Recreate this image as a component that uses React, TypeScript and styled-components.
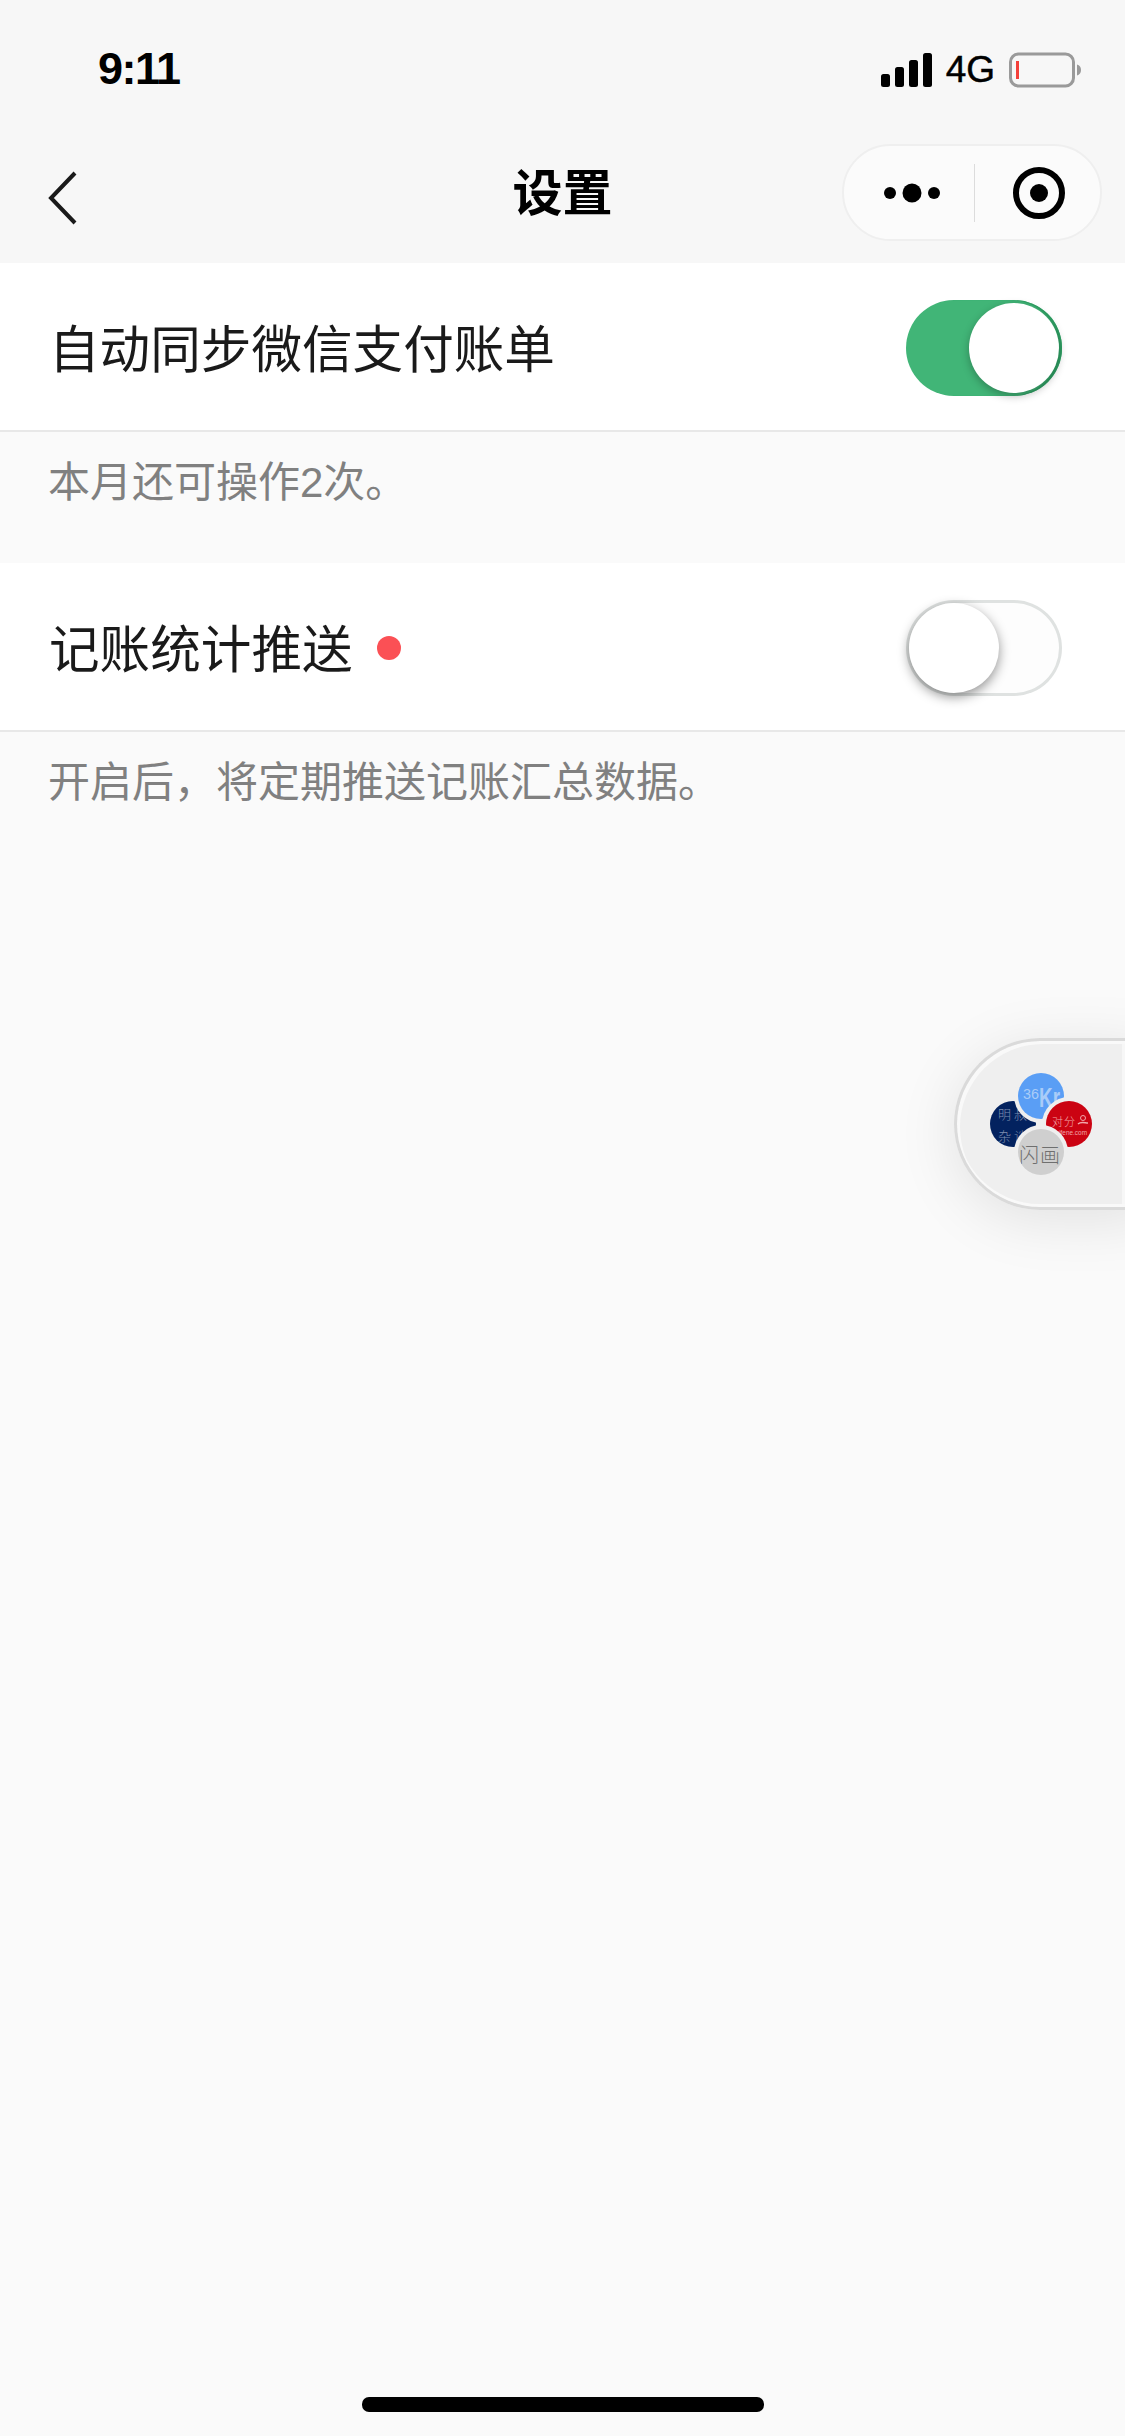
import React from 'react';
import styled, { createGlobalStyle } from 'styled-components';

const GlobalStyle = createGlobalStyle`
	html, body {
		margin: 0;
		padding: 0;
		background: #fafafa;
	}
	* {
		box-sizing: border-box;
	}
`;

const FONT = `"Liberation Sans", "Noto Sans CJK SC", sans-serif`;

const Page = styled.div`
	position: relative;
	display: flex;
	flex-direction: column;
	width: 1125px;
	height: 2436px;
	overflow: hidden;
	background: #fafafa;
	font-family: ${FONT};
`;

const Header = styled.header`
	background: #f7f7f7;
	height: 263px;
	flex: none;
`;

const StatusBar = styled.div`
	display: flex;
	justify-content: space-between;
	align-items: flex-start;
	height: 132px;
	padding: 45px 44px 0 98px;
`;

const Time = styled.span`
	margin-top: -2px;
	font-size: 45px;
	line-height: 52px;
	font-weight: 700;
	letter-spacing: -1.5px;
	color: #000;
`;

const StatusIcons = styled.div`
	display: flex;
	align-items: center;
	height: 50px;
`;

const Network = styled.span`
	font-size: 37px;
	line-height: 50px;
	color: #000;
	margin: 0 14px;
	-webkit-text-stroke: 0.5px #000;
`;

const NavBar = styled.nav`
	display: grid;
	grid-template-columns: 1fr auto 1fr;
	align-items: center;
	height: 131px;
	padding: 0 23px;
`;

const BackButton = styled.div`
	display: flex;
	align-items: center;
	margin-left: 25px;
`;

const Title = styled.h1`
	margin: 0 0 8px;
	font-size: 50px;
	line-height: 60px;
	font-weight: 700;
	color: #000;
`;

const Capsule = styled.div`
	justify-self: end;
	display: flex;
	align-items: center;
	width: 260px;
	height: 97px;
	margin-bottom: 10px;
	border: 2px solid #efefef;
	border-radius: 49px;
	background: #fbfbfb;
`;

const CapsuleSide = styled.div<{ $shift: number }>`
	display: flex;
	align-items: center;
	justify-content: center;
	flex: 1;
	height: 100%;
	padding-left: ${({ $shift }) => $shift}px;
`;

const CapsuleLine = styled.div`
	width: 1px;
	height: 58px;
	background: #dcdcdc;
`;

const Row = styled.section`
	display: flex;
	align-items: center;
	justify-content: space-between;
	height: 169px;
	padding: 3px 63px 0 49px;
	background: #fff;
	border-bottom: 2px solid #e8e8e8;
`;

const RowLabel = styled.div`
	display: flex;
	align-items: center;
	gap: 24px;
`;

const RowText = styled.span`
	padding-top: 5px;
	font-size: 50.6px;
	line-height: 60px;
	color: #1a1a1a;
`;

const RedDot = styled.span`
	width: 24px;
	height: 24px;
	border-radius: 50%;
	background: #fb5055;
`;

const Hint = styled.p<{ $height: number }>`
	margin: 0;
	height: ${({ $height }) => $height}px;
	padding: 22px 0 0 48px;
	font-size: 42px;
	line-height: 58px;
	color: #808080;
`;

const Track = styled.div<{ $on: boolean }>`
	display: flex;
	justify-content: ${({ $on }) => ($on ? 'flex-end' : 'flex-start')};
	align-items: center;
	width: 156px;
	height: 96px;
	padding: 0 3px;
	border-radius: 48px;
	background: ${({ $on }) => ($on ? '#41b577' : '#fdfdfd')};
	box-shadow: ${({ $on }) => ($on ? 'inset -3px 0 1px #2f9e63' : 'inset 0 0 0 3px #dfe2e1')};
`;

const Knob = styled.div<{ $on: boolean }>`
	width: 90px;
	height: 90px;
	border-radius: 50%;
	background: #fff;
	box-shadow: ${({ $on }) =>
		$on ? '0 3px 9px rgba(0, 0, 0, 0.28)' : '0 4px 12px rgba(0, 0, 0, 0.42)'};
`;

const FloatBall = styled.div`
	position: absolute;
	top: 1038px;
	right: -30px;
	display: flex;
	align-items: center;
	width: 201px;
	height: 172px;
	padding-left: 28px;
	border: 3px solid #dadada;
	border-right: none;
	border-radius: 86px 0 0 86px;
	background: linear-gradient(to right, #efefef 165px, #f7f7f7 165px);
	box-shadow: inset 3px 3px 0 #f9f9f9, inset 0 -3px 0 #f9f9f9,
		0 10px 60px rgba(0, 0, 0, 0.1);
`;

const HomeBar = styled.div`
	position: absolute;
	left: 362px;
	bottom: 24px;
	width: 402px;
	height: 15px;
	border-radius: 7px;
	background: #000;
`;

const Toggle = ({ on }: { on: boolean }) => (
	<Track $on={on}>
		<Knob $on={on} />
	</Track>
);

const SignalIcon = () => (
	<svg width='51' height='34' viewBox='0 0 51 34'>
		<rect x='0' y='21' width='9' height='13' rx='2.5' fill='#000' />
		<rect x='14' y='14' width='9' height='20' rx='2.5' fill='#000' />
		<rect x='28' y='7' width='9' height='27' rx='2.5' fill='#000' />
		<rect x='42' y='0' width='9' height='34' rx='2.5' fill='#000' />
	</svg>
);

const BatteryIcon = () => (
	<svg width='72' height='36' viewBox='0 0 72 36'>
		<rect x='1.5' y='2' width='63' height='32' rx='8' fill='none' stroke='#9a9a9a' strokeWidth='3' />
		<rect x='7' y='9' width='3' height='18' fill='#f4403a' />
		<path d='M68 12.5c2.6.6 4 2.800 4 5.500s-1.400 4.900-4 5.500z' fill='#9a9a9a' />
	</svg>
);

const BackIcon = () => (
	<svg width='30' height='54' viewBox='0 0 30 54'>
		<path d='M27 2 3 27l24 25' fill='none' stroke='#1a1a1a' strokeWidth='4' />
	</svg>
);

const MoreIcon = () => (
	<svg width='60' height='20' viewBox='0 0 60 20'>
		<circle cx='7' cy='10' r='6' fill='#000' />
		<circle cx='29' cy='10' r='9.500' fill='#000' />
		<circle cx='51' cy='10' r='6' fill='#000' />
	</svg>
);

const TargetIcon = () => (
	<svg width='54' height='54' viewBox='0 0 54 54'>
		<circle cx='27' cy='27' r='23' fill='none' stroke='#000' strokeWidth='6' />
		<circle cx='27' cy='27' r='9' fill='#000' />
	</svg>
);

const AppLogos = () => (
	<svg width='120' height='120' viewBox='0 0 120 120'>
		<defs>
			<clipPath id='navy'>
				<circle cx='28' cy='60' r='23' />
			</clipPath>
			<clipPath id='blue'>
				<circle cx='56' cy='32' r='23' />
			</clipPath>
			<clipPath id='red'>
				<circle cx='84' cy='60' r='23' />
			</clipPath>
			<clipPath id='grey'>
				<circle cx='56' cy='88' r='23' />
			</clipPath>
		</defs>
		<circle cx='28' cy='60' r='23' fill='#03225f' />
		<g clipPath='url(#navy)' fontFamily='"Noto Sans CJK SC", sans-serif' fontSize='13' fontWeight='300' fill='#7f8fb0'>
			<text x='13' y='55' letterSpacing='3'>
				明叔
			</text>
			<text x='13' y='77' letterSpacing='3'>
				杂谈
			</text>
		</g>
		<circle cx='56' cy='32' r='27' fill='#efefef' />
		<circle cx='56' cy='32' r='23' fill='#5a9ef5' />
		<g clipPath='url(#blue)' fontFamily='"Liberation Sans", sans-serif' fill='#a9ccf8'>
			<text x='38' y='35' fontSize='14' textLength='16' lengthAdjust='spacingAndGlyphs'>
				36
			</text>
			<text x='54' y='43' fontSize='27' fontWeight='700' textLength='21' lengthAdjust='spacingAndGlyphs'>
				Kr
			</text>
		</g>
		<circle cx='84' cy='60' r='27' fill='#efefef' />
		<circle cx='84' cy='60' r='23' fill='#cb0312' />
		<g clipPath='url(#red)' fill='#f1a6a9'>
			<text x='67' y='62' fontSize='11' fontFamily='"Noto Sans CJK SC", sans-serif' fontWeight='300' letterSpacing='1'>
				对分
			</text>
			<text x='67' y='71' fontSize='6.5' fontFamily='"Liberation Sans", sans-serif' textLength='35' lengthAdjust='spacingAndGlyphs'>
				duifene.com
			</text>
			<circle cx='98' cy='54' r='2.500' fill='none' stroke='#f1a6a9' strokeWidth='1' />
			<path d='M93 60c3-3 7-1 10-1' fill='none' stroke='#f1a6a9' strokeWidth='1.500' />
		</g>
		<circle cx='56' cy='88' r='27' fill='#efefef' />
		<circle cx='56' cy='88' r='23' fill='#cfcfcf' />
		<g clipPath='url(#grey)' fontFamily='"Noto Sans CJK SC", sans-serif' fontSize='20' fontWeight='300' fill='#6f6f6f'>
			<text x='34' y='99'>闪</text>
			<text x='55' y='99'>画</text>
		</g>
	</svg>
);

const App = () => {
	return (
		<Page>
			<GlobalStyle />
			<Header>
				<StatusBar>
					<Time>9:11</Time>
					<StatusIcons>
						<SignalIcon />
						<Network>4G</Network>
						<BatteryIcon />
					</StatusIcons>
				</StatusBar>
				<NavBar>
					<BackButton>
						<BackIcon />
					</BackButton>
					<Title>设置</Title>
					<Capsule>
						<CapsuleSide $shift={8}>
							<MoreIcon />
						</CapsuleSide>
						<CapsuleLine />
						<CapsuleSide $shift={3}>
							<TargetIcon />
						</CapsuleSide>
					</Capsule>
				</NavBar>
			</Header>
			<Row>
				<RowLabel>
					<RowText>自动同步微信支付账单</RowText>
				</RowLabel>
				<Toggle on />
			</Row>
			<Hint $height={131}>本月还可操作2次。</Hint>
			<Row>
				<RowLabel>
					<RowText>记账统计推送</RowText>
					<RedDot />
				</RowLabel>
				<Toggle on={false} />
			</Row>
			<Hint $height={120}>开启后，将定期推送记账汇总数据。</Hint>
			<FloatBall>
				<AppLogos />
			</FloatBall>
			<HomeBar />
		</Page>
	);
};

export default App;
